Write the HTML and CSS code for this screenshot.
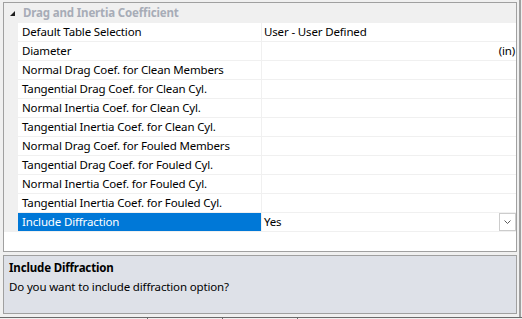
FILE: index.html
```html
<!DOCTYPE html>
<html lang="en">
<head>
    <meta charset="UTF-8">
    <meta name="viewport" content="width=device-width, initial-scale=1.0">
    <title>Property Grid</title>
    <link rel="stylesheet" href="styles.css">
</head>
<body>

    <div class="window">
        <div class="grid">
            <div class="category">
                <svg class="expander" width="5" height="5" viewBox="0 0 5 5">
                    <polygon points="5,0 5,5 0,5" fill="#1e1e1e"/>
                </svg>
                <span>Drag and Inertia Coefficient</span>
            </div>

            <div class="row">
                <div class="gutter"></div>
                <div class="label">Default Table Selection</div>
                <div class="value">User - User Defined</div>
            </div>
            <div class="row">
                <div class="gutter"></div>
                <div class="label">Diameter</div>
                <div class="value unit">(in)</div>
            </div>
            <div class="row">
                <div class="gutter"></div>
                <div class="label">Normal Drag Coef. for Clean Members</div>
                <div class="value"></div>
            </div>
            <div class="row">
                <div class="gutter"></div>
                <div class="label">Tangential Drag Coef. for Clean Cyl.</div>
                <div class="value"></div>
            </div>
            <div class="row">
                <div class="gutter"></div>
                <div class="label">Normal Inertia Coef. for Clean Cyl.</div>
                <div class="value"></div>
            </div>
            <div class="row">
                <div class="gutter"></div>
                <div class="label">Tangential Inertia Coef. for Clean Cyl.</div>
                <div class="value"></div>
            </div>
            <div class="row">
                <div class="gutter"></div>
                <div class="label">Normal Drag Coef. for Fouled Members</div>
                <div class="value"></div>
            </div>
            <div class="row">
                <div class="gutter"></div>
                <div class="label">Tangential Drag Coef. for Fouled Cyl.</div>
                <div class="value"></div>
            </div>
            <div class="row">
                <div class="gutter"></div>
                <div class="label">Normal Inertia Coef. for Fouled Cyl.</div>
                <div class="value"></div>
            </div>
            <div class="row">
                <div class="gutter"></div>
                <div class="label">Tangential Inertia Coef. for Fouled Cyl.</div>
                <div class="value"></div>
            </div>
            <div class="row selected">
                <div class="gutter"></div>
                <div class="label">Include Diffraction</div>
                <div class="value">
                    <span>Yes</span>
                    <span class="dropdown">
                        <svg width="7" height="4" viewBox="0 0 7 4">
                            <polyline points="0.5,0.5 3.5,3.5 6.5,0.5" fill="none" stroke="#5a5a5a" stroke-width="1"/>
                        </svg>
                    </span>
                </div>
            </div>
        </div>

        <div class="help">
            <div class="help-title">Include Diffraction</div>
            <div class="help-text">Do you want to include diffraction option?</div>
        </div>
    </div>

    <div class="tabs">
        <span class="tab first"></span>
        <span class="tab"></span>
        <span class="tab"></span>
    </div>

</body>
</html>
```

FILE: styles.css
```css
body {
    margin: 0;
    background: #f0f0f0;
    font-family: "Noto Sans", "Open Sans", sans-serif;
    font-size: 11.5px;
    letter-spacing: -0.15px;
    color: #000;
}
.window {
    width: 521px;
    height: 317px;
    box-sizing: border-box;
    padding: 2px 2px 0 3px;
    border-right: 2px solid #a0a0a0;
}
.grid {
    height: 250px;
    box-sizing: border-box;
    border: 1px solid #a0a0a0;
    background: white;
}
.category {
    height: 20px;
    background: #f0f0f0;
    display: flex;
    align-items: center;
    font-weight: bold;
    color: #a7acb7;
}
.expander {
    margin: 1px 0 0 6px;
    width: 5px;
    height: 5px;
}
.category span {
    margin-left: 8px;
    line-height: 20px;
}
.row {
    display: flex;
    height: 18px;
    line-height: 18px;
    border-bottom: 1px solid #f0f0f0;
}
.gutter {
    width: 14px;
    background: #f0f0f0;
}
.label {
    width: 244px;
    box-sizing: border-box;
    padding-left: 4px;
    border-right: 1px solid #f0f0f0;
    white-space: nowrap;
}
.value {
    flex: 1;
    display: flex;
    padding-left: 2px;
}
.unit {
    justify-content: flex-end;
    padding-right: 1px;
}
.selected .label {
    background: #0078d7;
    color: white;
}
.dropdown {
    margin-left: auto;
    width: 17px;
    height: 18px;
    box-sizing: border-box;
    border: 1px solid #cccccc;
    background: white;
    display: flex;
    align-items: center;
    justify-content: center;
}
.help {
    margin-top: 3px;
    height: 59px;
    box-sizing: border-box;
    border: 1px solid #a0a0a0;
    background: #dee1e8;
    padding: 3px 0 0 5px;
}
.help-title {
    font-weight: bold;
    line-height: 17px;
}
.help-text {
    margin-top: 2px;
    line-height: 17px;
}
.tabs {
    display: flex;
    height: 2px;
    border-top: 1px solid #6b6b6b;
}
.tab {
    width: 74px;
    border-right: 1px solid #6b6b6b;
}
.tab.first {
    width: 147px;
}
```
